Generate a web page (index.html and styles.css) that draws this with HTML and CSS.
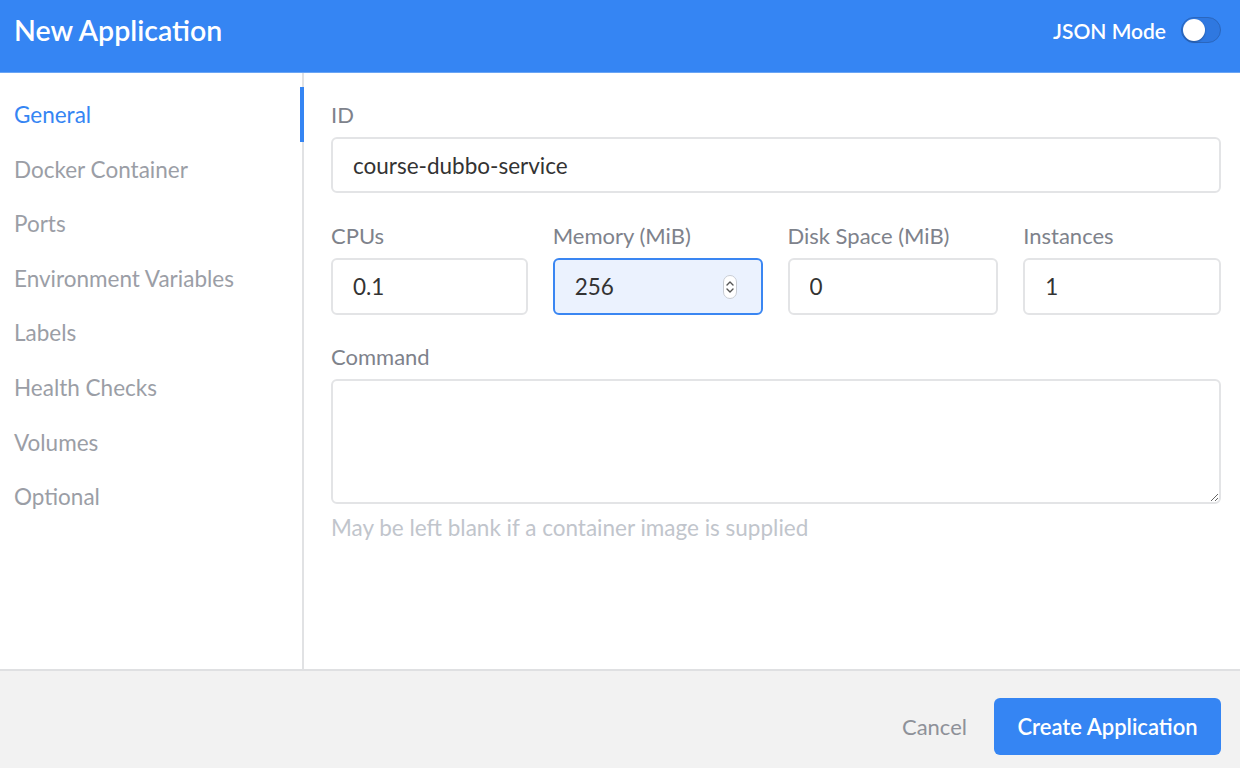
FILE: index.html
```html
<!DOCTYPE html>
<html>
<head>
    <title>New Application</title>
    <link rel="stylesheet" href="styles.css">
</head>
<body>
    <div class="modal">
        <div class="modal-header">
            <h1>New Application</h1>
            <label class="json-mode">
                <span>JSON Mode</span>
                <span class="toggle"><span class="knob"></span></span>
            </label>
        </div>

        <div class="modal-body">
            <ul class="side-nav">
                <li class="active">General</li>
                <li>Docker Container</li>
                <li>Ports</li>
                <li>Environment Variables</li>
                <li>Labels</li>
                <li>Health Checks</li>
                <li>Volumes</li>
                <li>Optional</li>
            </ul>

            <div class="form">
                <div class="field">
                    <label>ID</label>
                    <input type="text" value="course-dubbo-service">
                </div>

                <div class="field-row">
                    <div class="field">
                        <label>CPUs</label>
                        <input type="text" value="0.1">
                    </div>
                    <div class="field">
                        <label>Memory (MiB)</label>
                        <div class="number-wrap">
                            <input type="text" class="focused" value="256">
                            <svg class="stepper" width="14" height="24" viewBox="0 0 14 24">
                                <rect x="0.5" y="0.5" width="13" height="23" rx="6.5" fill="#fff" stroke="#c8ccd3"></rect>
                                <path d="M4 10l3-3 3 3" fill="none" stroke="#555" stroke-width="1.4" stroke-linecap="round" stroke-linejoin="round"></path>
                                <path d="M4 14l3 3 3-3" fill="none" stroke="#555" stroke-width="1.4" stroke-linecap="round" stroke-linejoin="round"></path>
                            </svg>
                        </div>
                    </div>
                    <div class="field">
                        <label>Disk Space (MiB)</label>
                        <input type="text" value="0">
                    </div>
                    <div class="field">
                        <label>Instances</label>
                        <input type="text" value="1">
                    </div>
                </div>

                <div class="field">
                    <label>Command</label>
                    <textarea></textarea>
                    <div class="help">May be left blank if a container image is supplied</div>
                </div>
            </div>
        </div>

        <div class="modal-footer">
            <button class="btn-link">Cancel</button>
            <button class="btn-primary">Create Application</button>
        </div>
    </div>
</body>
</html>
```

FILE: styles.css
```css
body {
    font-family: Lato, "Open Sans", sans-serif;
    margin: 0;
    padding: 0;
    background-color: #fff;
    color: #333;
    height: 100vh;
    overflow: hidden;
}
.modal {
    height: 768px;
    display: flex;
    flex-direction: column;
}
.modal-header {
    height: 72px;
    background-color: #3585f3;
    border-bottom: 1px solid #6aa5f5;
    display: flex;
    align-items: center;
    justify-content: space-between;
    padding: 0 19px 12px 14px;
    box-sizing: border-box;
    height: 73px;
    flex-shrink: 0;
}
h1 {
    margin: 0;
    color: #fff;
    font-size: 28.5px;
    font-weight: 600;
}
.json-mode {
    display: flex;
    align-items: center;
    gap: 15px;
    color: #fff;
    font-size: 21px;
    font-weight: 600;
}
.toggle {
    width: 40px;
    height: 26px;
    border-radius: 13px;
    background-color: #2f78e0;
    border: 1px solid #2a66bd;
    box-sizing: border-box;
    position: relative;
}
.knob {
    position: absolute;
    left: 1px;
    top: 1px;
    width: 22px;
    height: 22px;
    border-radius: 50%;
    background-color: #fff;
    box-shadow: 0 1px 2px rgba(0,0,0,0.3);
}
.modal-body {
    flex: 1;
    display: flex;
    min-height: 0;
}
.side-nav {
    list-style: none;
    margin: 0;
    padding: 14px 0 0 0;
    width: 302px;
    border-right: 2px solid #e1e2e4;
    flex-shrink: 0;
}
.side-nav li {
    font-size: 22.5px;
    line-height: 27px;
    padding: 14px 14px 13.6px;
    color: #9b9ea6;
    position: relative;
}
.side-nav li.active {
    color: #3585f3;
}
.side-nav li.active::after {
    content: "";
    position: absolute;
    right: -2px;
    top: 0;
    bottom: 0;
    width: 4px;
    background-color: #3585f3;
}
.form {
    flex: 1;
    padding: 28px 19px 0 27px;
    display: flex;
    flex-direction: column;
}
.field {
    display: flex;
    flex-direction: column;
}
.field label {
    font-size: 22px;
    line-height: 27px;
    color: #7e828b;
    margin-bottom: 9px;
}
input, textarea {
    font-family: inherit;
    font-size: 22.5px;
    color: #333;
    border: 2px solid #e3e4e6;
    border-radius: 6px;
    height: 56px;
    padding: 0 20px;
    box-sizing: border-box;
    outline: none;
    width: 100%;
    background-color: #fff;
}
input.focused {
    background-color: #ebf2fe;
    border-color: #3a86f2;
}
.field-row {
    display: grid;
    grid-template-columns: 197fr 210fr 211fr 198fr;
    gap: 25px;
    margin-top: 29px;
}
.field-row input {
    height: 57px;
}
.field-row + .field {
    margin-top: 28px;
}
.number-wrap {
    position: relative;
}
.stepper {
    position: absolute;
    right: 26px;
    top: 17px;
}
textarea {
    height: 125px;
    resize: vertical;
    padding: 12px 20px;
}
.help {
    font-size: 22.5px;
    line-height: 27px;
    color: #c1c5cc;
    margin-top: 10px;
}
.modal-footer {
    height: 99px;
    background-color: #f2f2f2;
    border-top: 2px solid #dfe0e2;
    box-sizing: border-box;
    display: flex;
    align-items: center;
    justify-content: flex-end;
    padding: 14px 19px 0 0;
    gap: 27px;
    flex-shrink: 0;
}
button {
    font-family: inherit;
    font-size: 22px;
    border: none;
    cursor: pointer;
}
.btn-link {
    background: none;
    color: #8e9199;
    padding: 0;
}
.btn-primary {
    background-color: #3585f3;
    color: #fff;
    font-weight: 600;
    width: 227px;
    height: 57px;
    border-radius: 6px;
}
```
